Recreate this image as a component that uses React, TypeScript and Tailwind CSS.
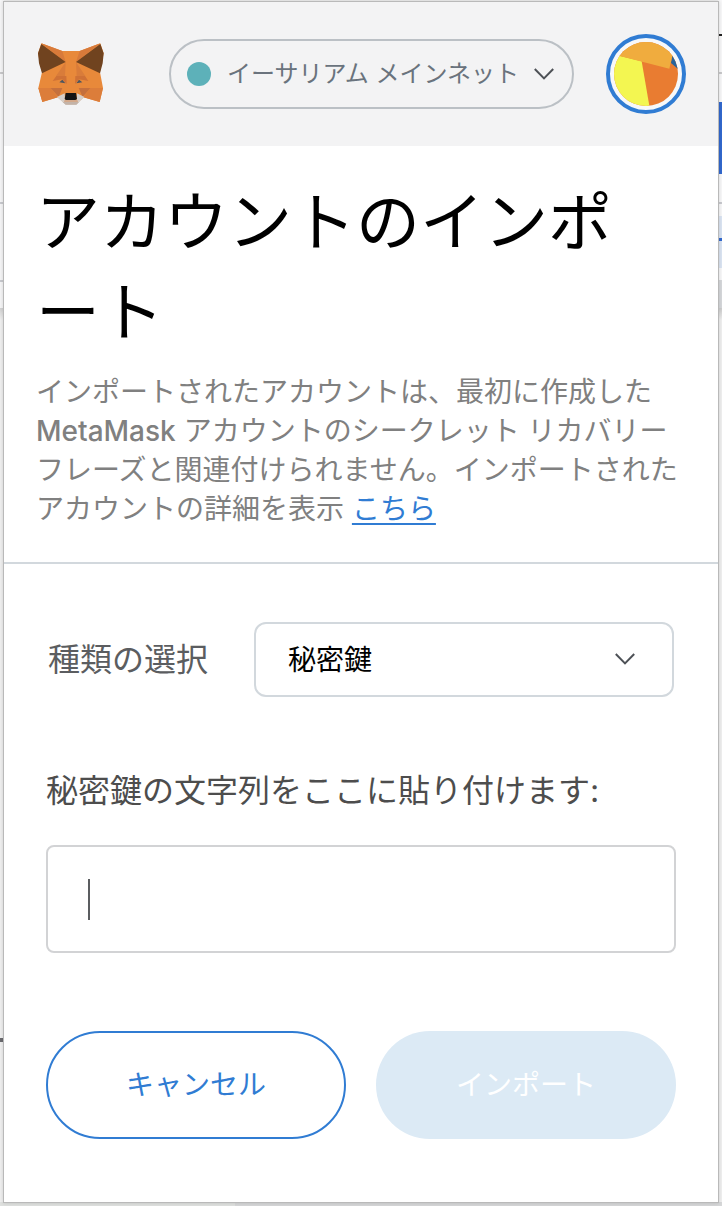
import { FormEvent, useState } from "react";

function FoxLogo() {
  return (
    <svg viewBox="111 129 201 189" className="h-[63px] w-[67px]" aria-label="MetaMask" role="img">
      <path
        fill="#e8893a"
        d="M124 130 L187 153 H239 L301 130 L311 160 L300 217 L309 264 L299 306 L251 292 L229 313 H197 L173 292 L127 306 L115 264 L126 217 L114 160Z"
      />
      <path fill="#d87a3a" d="M124 130 L187 153 L197 186Z M301 130 L239 153 L228 186Z" />
      <path fill="#d97c3a" d="M197 186 L195 228 H168Z M228 186 L230 228 H256Z" />
      <path fill="#dc7d3a" d="M115 264 L152 264 L174 292 L127 306Z M309 264 L271 264 L250 292 L299 306Z" />
      <path fill="#c5703d" d="M152 264 H187 L176 291Z M271 264 H236 L248 291Z" />
      <path fill="#cf7136" d="M169 228 H199 L200 252 L187 238 L158 243Z M255 228 H226 L225 252 L237 238 L265 243Z" />
      <path fill="#70431f" d="M124 132 L197 186 L126 220 L117 190 L114 160Z M301 132 L228 186 L300 220 L308 190 L311 160Z" />
      <path fill="#4a5560" d="M178 247 L187 239 L196 250Z M247 247 L237 239 L229 250Z" />
      <path fill="#d6d0cb" d="M171 291 L194 280 L195 300 H230 L231 280 L253 291 L229 314 H197Z" />
      <path fill="#d3a88a" d="M191 302 L198 299 H228 L235 302 L232 308 H194Z" />
      <path fill="#c3b3a8" d="M188 306 H237 L229 314 H197Z" />
      <path fill="#151515" d="M197 279 H228 L231 297 L226 300 H198 L194 297Z" />
    </svg>
  );
}

function AccountIcon() {
  return (
    <svg viewBox="318 41 240 240" className="size-20" aria-hidden="true">
      <clipPath id="account-clip">
        <circle cx="438" cy="161" r="96" />
      </clipPath>
      <circle cx="438" cy="161" r="114" fill="#f7f8f9" stroke="#307cd3" strokeWidth="12" />
      <g clipPath="url(#account-clip)">
        <path fill="#e97c31" d="M340 60H540V262H340Z" />
        <path fill="#f3f651" d="M340 102 L425 123 L449 262 H340Z" />
        <path fill="#27639b" d="M517 106 H545 V155 L513 128Z" />
        <path fill="#f0ac3e" d="M340 60 H540 L517 106 L508 145 L340 102Z" />
      </g>
    </svg>
  );
}

function Chevron({ className }: { className?: string }) {
  return (
    <svg viewBox="0 0 20 12" fill="none" stroke="currentColor" strokeWidth="2" className={className} aria-hidden="true">
      <path d="M0.8 1 L10 10.4 L19.2 1" />
    </svg>
  );
}

// The page that shows around the edges of the popup
function PageBehind() {
  return (
    <div className="absolute inset-0 flex flex-col overflow-hidden bg-[#f0f0f0]" aria-hidden="true">
      <div className="flex flex-1 justify-between">
        <div className="flex w-1 flex-col">
          <div className="h-[72px] bg-[#f6f6f7]" />
          <div className="h-0.5 bg-[#c9c9cb]" />
          <div className="h-32 bg-[#f6f6f7]" />
          <div className="h-0.5 bg-[#c9cacf]" />
          <div className="h-[76px] bg-[#f6f6f7]" />
          <div className="h-0.5 bg-[#c9cacf]" />
          <div className="h-[26px] bg-[#f6f6f7]" />
          <div className="h-3 bg-linear-to-b from-[#d2d2d2] to-[#f0f0f0]" />
          <div className="h-[718px]" />
          <div className="h-1 bg-[#6b6b6f]" />
        </div>
        <div className="flex w-1 flex-col">
          <div className="h-[34px] bg-[#f8f8f9]" />
          <div className="h-0.5 bg-[#222222]" />
          <div className="h-9 bg-[#f8f8f9]" />
          <div className="h-0.5 bg-[#c9c9cb]" />
          <div className="h-7 bg-[#f8f8f9]" />
          <div className="h-[72px] bg-[#3269cf]" />
          <div className="h-7 bg-[#f8f8f9]" />
          <div className="h-0.5 bg-[#c9cacf]" />
          <div className="h-3 bg-[#f8f8f9]" />
          <div className="h-[22px] bg-[#dbe5f3]" />
          <div className="h-[3px] bg-[#3269cf]" />
          <div className="h-[27px] bg-[#dbe5f3]" />
          <div className="h-3 bg-[#f8f8f9]" />
          <div className="h-7 bg-[#d6d8db]" />
          <div className="h-3 bg-linear-to-b from-[#cccccc] to-[#f0f0f0]" />
        </div>
      </div>
      <div className="flex h-1">
        <div className="w-[235px] bg-[#dfe1df]" />
        <div className="flex-1 bg-[#d6d7d8]" />
      </div>
    </div>
  );
}

export default function App() {
  const [type, setType] = useState("privateKey");
  const [privateKey, setPrivateKey] = useState("");

  const handleSubmit = (e: FormEvent) => {
    e.preventDefault();
  };

  return (
    <div className="relative flex min-h-screen flex-col px-[3px] pt-px pb-[3px] font-['Inter','Noto_Sans_CJK_JP',sans-serif]">
      <PageBehind />
      <main className="relative flex-1 border border-[#b9b9b9] bg-white pb-[62px] shadow-[0_0_4px_rgba(0,0,0,0.15)]">
        <header className="flex items-center bg-[#f3f3f4] py-8 pr-8 pl-[33px]">
          <FoxLogo />
          <button
            type="button"
            className="mr-8 ml-[65px] flex h-[70px] flex-1 items-center rounded-full border-2 border-[#bbc0c5] px-4 text-2xl text-[#6a737d]"
          >
            <span className="size-6 shrink-0 rounded-full bg-[#5db1b9]" />
            <span className="ml-4 whitespace-nowrap">イーサリアム メインネット</span>
            <Chevron className="mr-0.5 ml-auto h-3 w-5 shrink-0 text-[#4d5156]" />
          </button>
          <button type="button" aria-label="アカウント">
            <AccountIcon />
          </button>
        </header>

        <section className="border-b-2 border-[#d2d8dd] px-8 pt-[31px] pb-[33px]">
          <h1 className="pr-10 text-[64px] leading-[90px] text-black [line-break:anywhere]">アカウントのインポート</h1>
          <p className="mt-4 pr-1 text-[28px] leading-[39px] text-[#808080]">
            インポートされたアカウントは、最初に作成した
            <br />
            <span className="font-medium">MetaMask</span> アカウントのシークレット リカバリーフレーズと関連付けられません。インポートされたアカウントの詳細を表示{" "}
            <a href="#" className="text-[#307cd3] underline decoration-2 underline-offset-4">
              こちら
            </a>
          </p>
        </section>

        <form onSubmit={handleSubmit} className="px-[42px] pt-[58px]">
          <div className="flex items-center px-0.5">
            <label htmlFor="import-type" className="w-[206px] text-[32px] text-[#5b5d60]">
              種類の選択
            </label>
            <div className="relative flex-1">
              <select
                id="import-type"
                value={type}
                onChange={(e) => setType(e.target.value)}
                className="block h-[75px] w-full appearance-none rounded-xl border-2 border-[#d2d8dd] bg-white px-8 text-[28px] text-black"
              >
                <option value="privateKey">秘密鍵</option>
                <option value="json">JSONファイル</option>
              </select>
              <Chevron className="pointer-events-none absolute top-[31px] right-[39px] h-3 w-5 text-[#4d5156]" />
            </div>
          </div>

          <label htmlFor="private-key" className="mt-[70px] block text-[32px] leading-[48px] text-[#4d4d4d]">
            秘密鍵の文字列をここに貼り付けます:
          </label>
          <div className="relative mt-[30px]">
            <input
              id="private-key"
              type="password"
              value={privateKey}
              onChange={(e) => setPrivateKey(e.target.value)}
              className="block h-[108px] w-full rounded-lg border-2 border-[#d2d3d5] px-10 text-[28px] caret-transparent outline-none"
            />
            <span className="pointer-events-none absolute top-[34px] left-[42px] h-[41px] w-0.5 bg-[#5b5d60]" />
          </div>

          <div className="mt-[78px] grid grid-cols-2 gap-[30px] text-[28px]">
            <button type="button" className="h-[108px] rounded-full border-2 border-[#307cd3] text-[#307cd3]">
              キャンセル
            </button>
            <button type="submit" disabled={!privateKey} className="h-[108px] rounded-full bg-[#307cd3] text-white disabled:bg-[#dceaf5]">
              インポート
            </button>
          </div>
        </form>
      </main>
    </div>
  );
}
